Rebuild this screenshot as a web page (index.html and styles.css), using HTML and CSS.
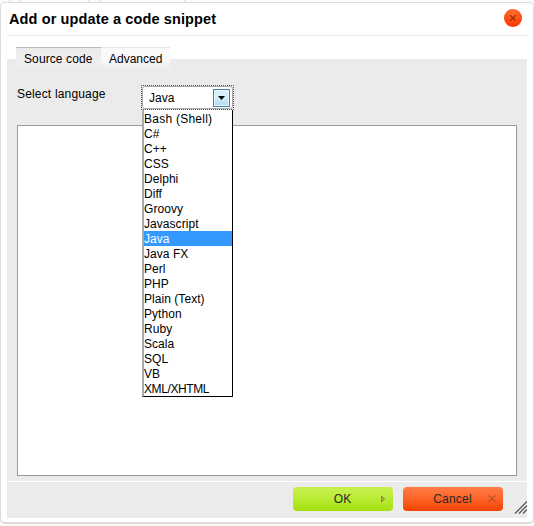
FILE: index.html
```html
<!DOCTYPE html>
<html lang="en">
<head>
<meta charset="utf-8">
<title>Add or update a code snippet</title>
<link rel="stylesheet" href="styles.css">
</head>
<body>
<svg class="backdrop" width="200" height="2" viewBox="0 0 200 2"><path d="M9 0l2 2M21 0l-2 2M88 0l2 2M101 0l-2 2M184 0l1 2" stroke="#d8d8d8"/></svg>
<section class="dialog">
  <header class="header">
    <h1>Add or update a code snippet</h1>
    <button class="close" aria-label="Close"><svg width="8" height="8" viewBox="0 0 8 8"><path d="M1.200 1.200l5.500 5.500M6.700 1.200L1.200 6.700" stroke="#a52e0c" stroke-width="1.500"/></svg></button>
  </header>
  <nav class="tabs">
    <a class="tab active">Source code</a>
    <a class="tab">Advanced</a>
  </nav>
  <main class="panel">
    <div class="field">
      <label>Select language</label>
      <div class="select">
        <div class="focus"><div class="control"><span>Java</span><i class="arrow"><svg width="7" height="4" viewBox="0 0 7 4"><path d="M0 0h7L3.500 4z"/></svg></i></div></div>
        <ul class="menu">
          <li class="wide">Bash (Shell)</li>
          <li>C#</li>
          <li>C++</li>
          <li>CSS</li>
          <li>Delphi</li>
          <li>Diff</li>
          <li>Groovy</li>
          <li>Javascript</li>
          <li class="selected">Java</li>
          <li>Java FX</li>
          <li>Perl</li>
          <li>PHP</li>
          <li>Plain (Text)</li>
          <li>Python</li>
          <li>Ruby</li>
          <li>Scala</li>
          <li>SQL</li>
          <li>VB</li>
          <li class="narrow">XML/XHTML</li>
        </ul>
      </div>
    </div>
    <div class="editor"></div>
  </main>
  <footer class="footer">
    <button class="btn ok"><span>OK</span><svg width="6" height="8" viewBox="0 0 6 8"><path d="M1.500 1v6L4.500 4z" fill="#b0b84a" stroke="#80852f"/></svg></button>
    <button class="btn cancel"><span>Cancel</span><svg width="8" height="7" viewBox="0 0 8 7"><path d="M.5 1h1.500L6 6h1.500M7.500 1H6L2 6H.5" fill="none" stroke="#9c5030"/></svg></button>
    <svg class="grip" width="13" height="13" viewBox="0 0 13 13"><path d="M1 12.500L13 .5M5 12.500L13 4.500M9 12.500L13 8.500" stroke="#5a5a5a" stroke-width="1.300"/></svg>
  </footer>
</section>
</body>
</html>
```
FILE: styles.css
```css
* { box-sizing: border-box; }
body {
  margin: 0;
  height: 526px;
  padding-top: 2px;
  overflow: hidden;
  background: #fafafa;
  font: 12px/15px "Liberation Sans", Arial, sans-serif;
  color: #000;
}
button { font: inherit; border: 0; padding: 0; }
.backdrop { position: absolute; left: 0; top: 0; }
.dialog {
  height: 522px;
  border: 1px solid #dcdcdc;
  border-bottom-width: 2px;
  border-radius: 5px;
  background: #fff;
  padding: 0 6px;
}
.header {
  height: 33px;
  display: flex;
  justify-content: space-between;
  align-items: center;
  border-bottom: 1px solid #e9e9e9;
  padding: 0 5px 0 2px;
}
h1 { margin: 0; font-size: 14.500px; line-height: 18px; letter-spacing: 0.12px; }
.close {
  width: 18px;
  height: 18px;
  margin-top: -2px;
  border-radius: 50%;
  background: radial-gradient(circle at 50% 20%, #ff7130, #ff4b10 55%, #fb2500);
  display: flex;
  align-items: center;
  justify-content: center;
}
.tabs {
  display: flex;
  margin: 11px 0 -10px 9px;
  position: relative;
}
.tab {
  width: 85px;
  height: 22px;
  padding: 4px 0 0 8px;
  border-top: 1px solid #bdbdbd;
  background: linear-gradient(#e9e9e9, #f0f0f0 60%, #ebebeb);
  letter-spacing: 0.1px;
}
.tab + .tab {
  width: 69px;
  border-color: #e8e8e8;
  background: linear-gradient(#fafafa, #f8f8f8 60%, #ebebeb);
  letter-spacing: 0;
}
.panel {
  height: 422px;
  background: #ebebeb;
  padding: 26px 10px 0;
}
.field { display: flex; height: 40px; }
label { width: 124px; padding-top: 2px; letter-spacing: 0.17px; }
.select { position: relative; width: 93px; height: 25px; }
.focus {
  height: 25px;
  border: 1px dotted #555;
}
.control {
  height: 23px;
  border: 1px solid #aaa;
  border-radius: 3px;
  background: #fff;
  display: flex;
  justify-content: space-between;
  align-items: center;
  padding: 1px 2px 0 6px;
}
.arrow {
  width: 17px;
  height: 18px;
  border: 1px solid #3c7fb1;
  box-shadow: inset 0 0 0 1px #eaf6fd;
  background: linear-gradient(#d9f0fc 45%, #a9daf5);
  display: flex;
  align-items: center;
  justify-content: center;
}
.menu {
  position: absolute;
  left: 1px;
  top: 25px;
  z-index: 2;
  width: 91px;
  margin: 0;
  padding: 1px 0 0;
  list-style: none;
  background: #fff;
  border: solid #000;
  border-width: 0 1px 1px 2px;
  border-left-color: #aaa;
}
.menu li { height: 15px; line-height: 17px; letter-spacing: 0.05px; }
.menu .wide { letter-spacing: 0.25px; }
.menu .narrow { letter-spacing: -0.4px; }
.selected { background: #3399ff; color: #fff; }
.editor { height: 351px; background: #fff; border: 1px solid #999; }
.footer {
  height: 37px;
  border-top: 1px solid #fff;
  background: #ebebeb;
  display: flex;
  justify-content: flex-end;
  padding-top: 5px;
}
.btn {
  width: 100px;
  height: 24px;
  border-radius: 4px;
  margin-right: 10px;
  color: #282828;
  letter-spacing: 0.2px;
  display: flex;
  align-items: center;
  justify-content: center;
  position: relative;
}
.btn span { margin-right: 1px; }
.btn svg { position: absolute; right: 7px; top: 8px; }
.ok { background: linear-gradient(#c8f04f, #b9eb34 50%, #a5df0c); }
.cancel { background: linear-gradient(#ff7d45, #fb6327 50%, #f44300); margin-right: 11px; }
.grip { align-self: flex-end; margin-bottom: 4px; }
```
